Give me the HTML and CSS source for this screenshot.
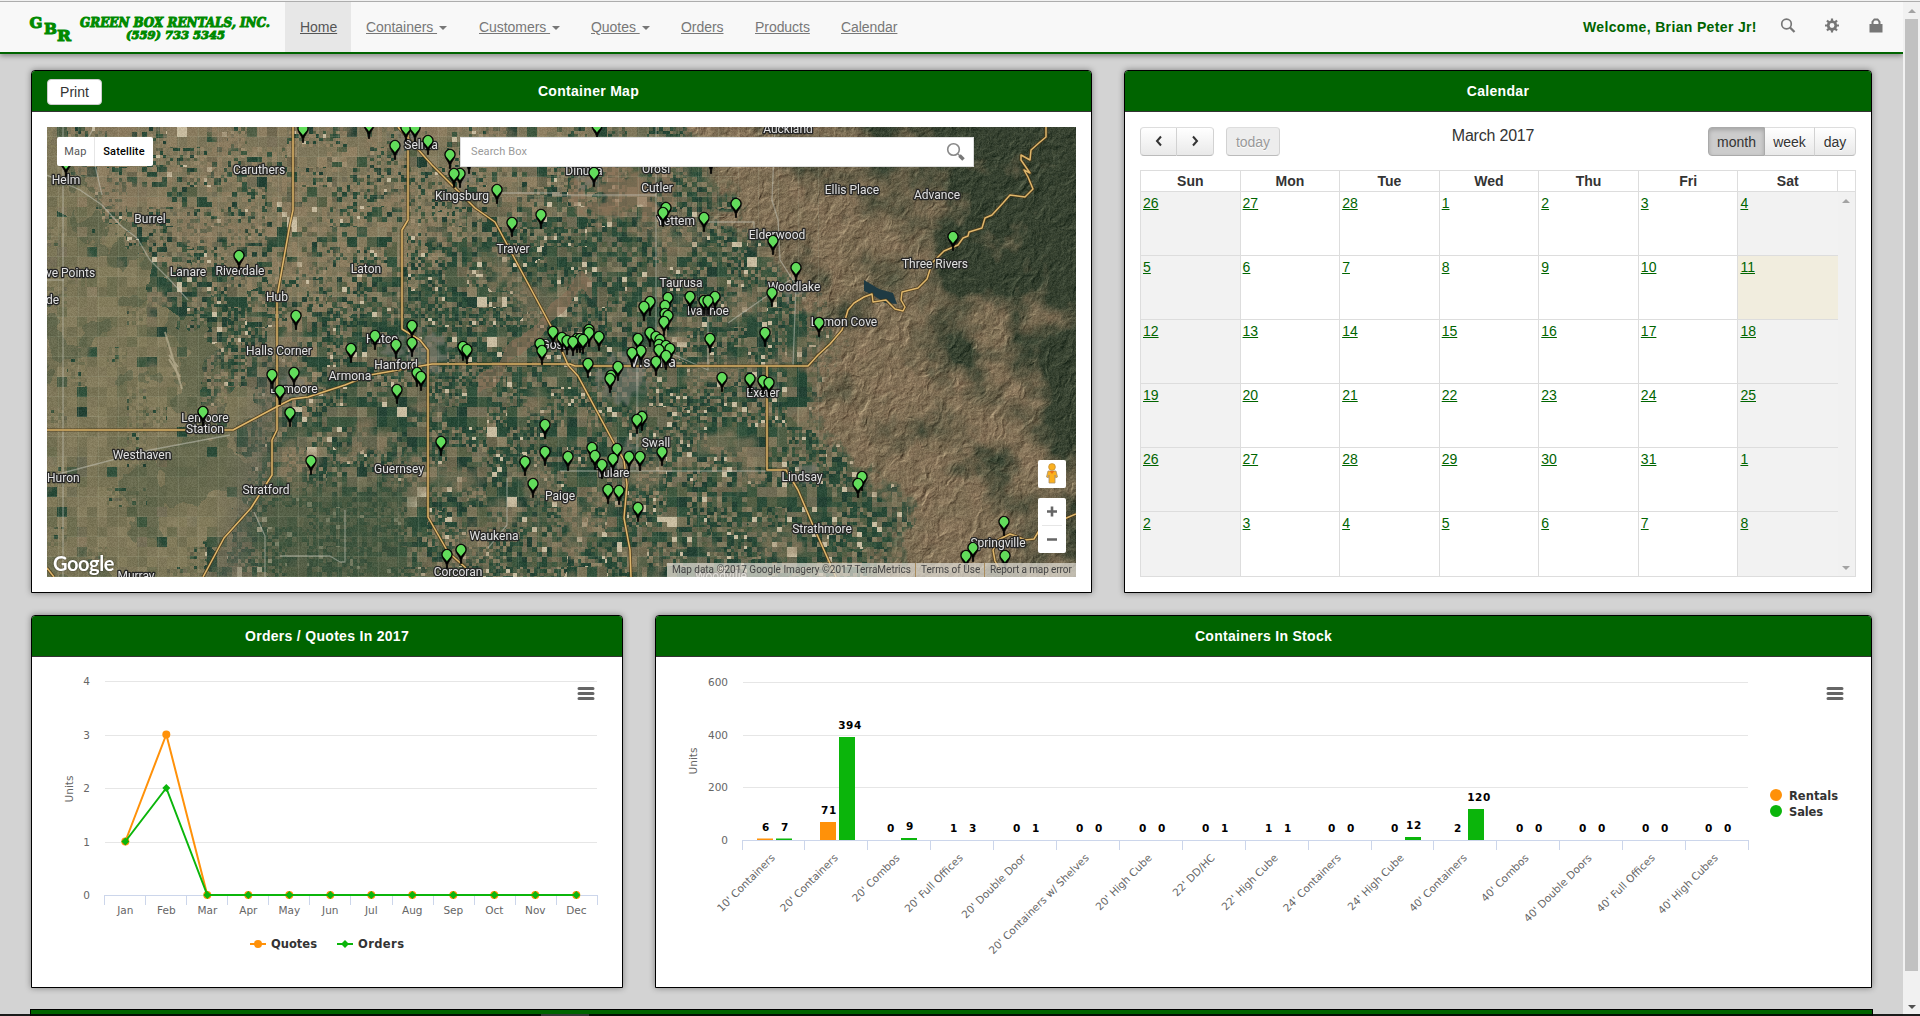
FILE: index.html
```html
<!DOCTYPE html>
<html lang="en">
<head>
<meta charset="utf-8">
<title>Green Box Rentals, Inc.</title>
<link rel="stylesheet" href="styles.css">
</head>
<body>
<div class="page">
  <div class="content">
    <header class="navbar">
      <div class="brand">
        <svg width="285" height="50" viewBox="0 2 285 50" class="logo">
          <text x="29.500" y="27.500" font-size="14.500" textLength="13" lengthAdjust="spacingAndGlyphs">G</text>
          <text x="44" y="34" font-size="14.500" textLength="13" lengthAdjust="spacingAndGlyphs">B</text>
          <text x="57" y="40.500" font-size="14.500" textLength="14" lengthAdjust="spacingAndGlyphs">R</text>
          <text x="80" y="27" font-size="12.500" font-style="italic" textLength="190" lengthAdjust="spacingAndGlyphs">GREEN BOX RENTALS, INC.</text>
          <text x="126" y="38.500" font-size="11.500" font-style="italic" textLength="99" lengthAdjust="spacingAndGlyphs">(559) 733 5345</text>
        </svg>
      </div>
      <nav class="menu">
        <a class="active w-home" href="#">Home</a>
        <a class="w-containers" href="#">Containers <i class="caret"></i></a>
        <a class="w-customers" href="#">Customers <i class="caret"></i></a>
        <a class="w-quotes" href="#">Quotes <i class="caret"></i></a>
        <a class="w-orders" href="#">Orders</a>
        <a class="w-products" href="#">Products</a>
        <a href="#">Calendar</a>
      </nav>
      <div class="user">
        <span class="welcome">Welcome, Brian Peter Jr!</span>
        <svg width="16" height="16" viewBox="0 0 16 16"><circle cx="6.500" cy="6" r="4.800" fill="none" stroke="#777" stroke-width="1.700"/><path d="M10 9.500l4.500 4.500" stroke="#777" stroke-width="2.300"/></svg>
        <svg width="16" height="16" viewBox="0 0 16 16"><circle cx="8" cy="7.500" r="3.800" fill="none" stroke="#777" stroke-width="2.700"/><path d="M8 .5v2.500M8 12v2.500M1 7.500h2.500M12.500 7.500h2.500M3 2.500l2 2M11 10.500l2 2M13 2.500l-2 2M3 12.500l2-2" stroke="#777" stroke-width="2.200"/></svg>
        <svg width="16" height="16" viewBox="0 0 16 16"><path fill="#777" fill-rule="evenodd" d="M1.500 6h2V3.500L6 .5h4l2.500 3V6h2v8.500h-13zM5.500 6h5V4L9.300 2.500H6.700L5.500 4z"/></svg>
      </div>
    </header>

    <main class="rows">
      <div class="row row-top">
        <section class="panel panel-map">
          <h2 class="head head-tools"><button class="print">Print</button>Container Map</h2>
          <div class="map">
            <canvas id="terrain" width="1029" height="450"></canvas>
            <svg id="overlay" class="layer" width="1029" height="450" viewBox="47 127 1029 450"></svg>
            <div class="map-type"><span>Map</span><b>Satellite</b></div>
            <div class="search"><span>Search Box</span>
              <svg width="20" height="20" viewBox="0 0 20 20"><circle cx="7.500" cy="7.500" r="5.800" fill="none" stroke="#888" stroke-width="1.600"/><path d="M12 12l2 2" stroke="#888" stroke-width="1.500"/><path d="M13.500 13.500l4 4" stroke="#777" stroke-width="3.600"/></svg>
            </div>
            <div class="pegman"><svg width="14" height="21" viewBox="0 0 14 21"><circle cx="7" cy="4" r="3.400" fill="#fbb01e" stroke="#b98a3c" stroke-width=".7"/><path d="M3 8h8l1.500 6-1.800.8L10 12v8H4v-8l-.7 2.800L1.500 14z" fill="#fbb01e" stroke="#a9906a" stroke-width=".8"/><path d="M4.500 8h5L7 11z" fill="#e8711c"/></svg></div>
            <div class="zoom"><svg width="28" height="55" viewBox="0 0 28 55"><path d="M9 13.500h10M14 8.500v10M9 41.500h10" stroke="#666" stroke-width="2.600"/><path d="M4 27.500h20" stroke="#e6e6e6"/></svg></div>
            <div class="google">Google</div>
            <div class="credits"><span class="c1">Map data ©2017 Google Imagery ©2017 TerraMetrics</span><span class="c2">Terms of Use</span><span class="c3">Report a map error</span></div>
          </div>
        </section>
        <section class="panel panel-cal">
          <h2 class="head">Calendar</h2>
          <div class="cal">
            <div class="tools">
              <div class="group"><button class="w37"><svg width="10" height="12" viewBox="0 0 10 12"><path d="M7 1.500L3 6l4 4.500" fill="none" stroke="#333" stroke-width="2"/></svg></button><button class="w37"><svg width="10" height="12" viewBox="0 0 10 12"><path d="M3 1.500L7 6l-4 4.500" fill="none" stroke="#333" stroke-width="2"/></svg></button></div>
              <button class="today-btn" disabled>today</button>
              <div class="month-title">March 2017</div>
              <div class="group views"><button class="pressed w56">month</button><button class="w50">week</button><button class="w41">day</button></div>
            </div>
            <div class="grid" id="calendar"></div>
          </div>
        </section>
      </div>
      <div class="row row-charts">
        <section class="panel panel-line">
          <h2 class="head">Orders / Quotes In 2017</h2>
          <svg id="line" class="chart" width="591" height="330" viewBox="32 657 591 330"></svg>
        </section>
        <section class="panel panel-bars">
          <h2 class="head">Containers In Stock</h2>
          <svg id="bars" class="chart" width="1215" height="330" viewBox="656 657 1215 330"></svg>
        </section>
      </div>
      <div class="next-panel"></div>
    </main>
  </div>
  <aside class="scrollbar"><i class="up"></i><div class="thumb"></div><i class="down"></i></aside>
  <div class="taskbar"><i></i></div>
</div>
<script src="script.js"></script>
</body>
</html>
```
FILE: styles.css
```css
* { box-sizing: border-box; }
body { margin: 0; background: #d3d3d3; font: 14px/20px "Liberation Sans", Arial, sans-serif; color: #333; overflow: hidden; }
button { font: inherit; color: inherit; }
.page { width: 1920px; height: 1016px; display: flex; position: relative; overflow: hidden; border-top: 1px solid #f1f1f1; }
.page::before { content: ""; position: absolute; left: 0; right: 0; top: 0; height: 1px; background: #adadad; }
.content { width: 1903px; }

.navbar { height: 53px; padding-top: 1px; display: flex; background: #f8f8f8; border-bottom: 2px solid #006400; box-shadow: 0 2px 5px rgba(0,0,0,.35); }
.brand { width: 285px; }
.logo { display: block; }
.logo text { font-family: "DejaVu Serif", "Liberation Serif", serif; font-weight: 700; fill: #008a00; stroke: #008a00; stroke-width: 1px; }
.menu { display: flex; flex: 1; }
.menu a { padding: 15px 0 0 15px; height: 50px; color: #777; text-decoration: underline; letter-spacing: -.05px; white-space: pre; }
.menu .active { background: #e7e7e7; color: #555; }
.w-home { width: 66px; }
.w-containers { width: 113px; }
.w-customers { width: 112px; }
.w-quotes { width: 90px; }
.w-orders { width: 74px; }
.w-products { width: 86px; }
.caret { display: inline-block; border: 4px solid transparent; border-top-color: #777; border-bottom: 0; vertical-align: middle; margin-left: 2px; }
.user { display: flex; padding: 15px 19px 0 0; }
.user svg { margin: 1px 0 0 28px; }
.user svg:first-of-type { margin-left: 24px; }
.welcome { font-weight: 700; color: #006400; width: 173px; white-space: nowrap; letter-spacing: .35px; }

.rows { padding: 16px 31px 0 31px; }
.row { display: flex; justify-content: space-between; margin-bottom: 22px; }
.row-top { height: 523px; }
.row-charts { height: 373px; margin-bottom: 21px; }
.panel { background: #fff; border: 1px solid #000; border-radius: 4px 4px 0 0; box-shadow: 0 0 6px rgba(0,0,0,.4); }
.panel-map { width: 1061px; }
.panel-cal { width: 748px; }
.panel-line { width: 592px; }
.panel-bars { width: 1217px; }
.head { margin: 0; height: 41px; background: #006400; border-bottom: 1px solid #333; border-radius: 3px 3px 0 0; color: #fff; font-size: 14px; line-height: 40px; text-align: center; position: relative; letter-spacing: .3px; }
.head-tools { padding-left: 54px; }
.print { position: absolute; left: 15px; top: 8px; width: 55px; height: 26px; background: #fff; border: 1px solid #ccc; border-radius: 4px; color: #333; font-weight: 400; line-height: 22px; padding: 0; }
.chart { display: block; }

.map { position: relative; width: 1029px; height: 450px; margin: 15px; overflow: hidden; }
.layer, .map canvas { position: absolute; left: 0; top: 0; }
#overlay text { font: 12px Roboto, sans-serif; fill: #e2e2e2; stroke: #262626; stroke-width: 2.6px; paint-order: stroke; stroke-linejoin: round; text-anchor: middle; }
#overlay .start { text-anchor: start; }
#overlay .big { font-size: 14px; letter-spacing: .8px; }
.map-type { position: absolute; left: 10px; top: 10px; height: 29px; width: 96px; display: flex; background: #fff; border-radius: 2px; font: 11px/29px Roboto, sans-serif; color: #565656; }
.map-type span { width: 38px; text-align: center; border-right: 1px solid #e6e6e6; letter-spacing: .3px; }
.map-type b { flex: 1; text-align: center; color: #000; font-weight: 500; letter-spacing: .15px; }
.search { position: absolute; left: 413px; top: 10px; width: 514px; height: 30px; background: #fff; border: 1px solid #ddd; display: flex; justify-content: space-between; align-items: center; padding: 0 7px 0 10px; color: #999; font: 11px/28px Roboto, sans-serif; letter-spacing: .1px; }
.pegman, .zoom { position: absolute; left: 991px; width: 28px; background: #fff; border-radius: 2px; }
.pegman { top: 333px; height: 28px; text-align: center; padding-top: 3px; line-height: 0; }
.zoom { top: 371px; height: 55px; }
.google { position: absolute; left: 6px; top: 423px; color: #fff; font: 700 20px/26px Lato, sans-serif; letter-spacing: -.4px; text-shadow: 0 0 2px rgba(0,0,0,.6); }
.credits { position: absolute; right: 0; bottom: 0; width: 409px; height: 14px; background: rgba(225,222,214,.72); font: 10px/14px Roboto, sans-serif; color: #444; display: flex; white-space: nowrap; }
.credits span { padding-left: 5px; }
.c1 { width: 248px; }
.c2 { width: 69px; border-left: 1px solid #a98b5c; }
.c3 { border-left: 1px solid #a98b5c; letter-spacing: -.1px; }

.cal { padding: 15px; }
.tools { display: flex; height: 43px; align-items: flex-start; position: relative; }
.tools button { height: 29px; border: 1px solid #d2d2d2; border-color: #ddd #d2d2d2 #bbb; background: linear-gradient(#fff, #e9e9e9); text-shadow: 0 1px 1px #fff; padding: 0; text-align: center; }
.group { display: flex; }
.group button + button { border-left: 0; }
.group button:first-child { border-radius: 4px 0 0 4px; }
.group button:last-child { border-radius: 0 4px 4px 0; }
.w37 { width: 37px; }
.w41 { width: 41px; }
.w50 { width: 50px; }
.w56 { width: 57px; }
.tools .pressed { background: #ccc; box-shadow: inset 0 2px 4px rgba(0,0,0,.2); border-color: #aaa; text-shadow: none; }
.tools .today-btn { width: 54px; margin-left: 12px; border-radius: 4px; color: #999; background: #ededed; }
.month-title { flex: 1; text-align: center; font-size: 16px; line-height: 17px; padding-right: 2px; letter-spacing: -.2px; }
.grid { width: 716px; height: 407px; display: grid; grid-template: 21px repeat(6, 1fr) / repeat(7, 1fr) 17px; border: 1px solid #ddd; }
.grid > div { border-right: 1px solid #ddd; border-bottom: 1px solid #ddd; padding: 1px 2px; }
.grid .day-name { font-weight: 700; text-align: center; padding: 0; }
.grid .weekend { background: #f2f2f2; }
.grid .today { background: #f1edde; }
.grid .last { border-bottom: 0; }
.grid .edge { border-right: 0; }
.grid a { color: #006400; text-decoration: underline; }
.grid .cal-scroll { grid-column: 8; grid-row: 2 / 8; background: #f1f1f1; border: 0; display: flex; flex-direction: column; justify-content: space-between; align-items: center; padding: 7px 0 6px; }
.up, .down { border: 4px solid transparent; }
.up { border-bottom-color: #a3a3a3; border-top: 0; }
.down { border-top-color: #a3a3a3; border-bottom: 0; }

.chart text { font: 10.5px "DejaVu Sans", sans-serif; fill: #666; }
.chart .mid { text-anchor: middle; }
.chart .end { text-anchor: end; }
.chart .value { font-weight: 700; fill: #000; text-anchor: middle; letter-spacing: .6px; }
.chart .legend { font-weight: 700; fill: #333; font-size: 11.5px; }

.next-panel { height: 20px; margin: 0 -1px; background: #006400; border: 1px solid #000; }
.scrollbar { width: 17px; background: #f1f1f1; padding: 8px 2px 0; display: flex; flex-direction: column; align-items: center; }
.thumb { width: 13px; height: 952px; margin: 6px 0 34px; background: #c1c1c1; }
.scrollbar .down { border-top-color: #505050; }
.taskbar { position: absolute; left: 0; right: 0; bottom: 0; height: 2px; background: rgba(5,5,5,.9); }
.taskbar i { position: absolute; left: 541px; width: 48px; top: 0; height: 2px; background: #383838; }
```
FILE: script.js
```js
/* Small deterministic random source, so the terrain is stable between loads. */
function hash(x, y, s) {
  let h = Math.imul(x | 0, 374761393) + Math.imul(y | 0, 668265263) + Math.imul(s | 0, 1442695041);
  h = Math.imul(h ^ (h >>> 13), 1274126177);
  h ^= h >>> 16;
  return (h >>> 0) / 4294967296;
}
function noise(x, y, s) {
  const xi = Math.floor(x), yi = Math.floor(y), fx = x - xi, fy = y - yi;
  const u = fx * fx * (3 - 2 * fx), v = fy * fy * (3 - 2 * fy);
  const a = hash(xi, yi, s), b = hash(xi + 1, yi, s), c = hash(xi, yi + 1, s), d = hash(xi + 1, yi + 1, s);
  return (a + (b - a) * u) * (1 - v) + (c + (d - c) * u) * v;
}
function fbm(x, y, s) {
  return noise(x, y, s) * .5 + noise(x * 2, y * 2, s + 1) * .27 + noise(x * 4, y * 4, s + 2) * .15 + noise(x * 8, y * 8, s + 3) * .08;
}
const clamp = v => Math.max(0, Math.min(1, v));
const mix = (a, b, t) => [a[0] + (b[0] - a[0]) * t, a[1] + (b[1] - a[1]) * t, a[2] + (b[2] - a[2]) * t];
function along(stops, y) {
  for (let i = 1; i < stops.length; i++) {
    if (y <= stops[i][0]) {
      const p = stops[i - 1], q = stops[i];
      return p[1] + (q[1] - p[1]) * (y - p[0]) / (q[0] - p[0]);
    }
  }
  return stops[stops.length - 1][1];
}

/* Towns drawn as grey patches: x, y, radius. */
const towns = [[378, 225, 22], [350, 222, 14], [245, 258, 14], [575, 252, 26], [355, 15, 14], [415, 50, 10], [575, 330, 16], [540, 50, 12], [520, 225, 14], [715, 260, 12], [745, 165, 9], [760, 345, 10]];
const lime = [[96, 101, 72], [42, 75, 56], [32, 62, 50], [66, 90, 64], [138, 124, 95], [117, 106, 81], [52, 84, 62], [158, 139, 108], [86, 98, 72], [36, 71, 53], [128, 116, 92]];
const khaki = [[122, 116, 85], [134, 126, 92], [114, 110, 80], [128, 119, 90], [105, 104, 76], [140, 130, 98], [96, 102, 72]];

function fieldColour(x, y) {
  const bw = 20, bx = Math.floor(x / bw), by = Math.floor(y / bw);
  const r = hash(bx, by, 3);
  const wild = clamp((fbm(x / 90, y / 90, 50) - .35) * 2);
  let size = r < .2 ? 10 : r < .55 + wild * .3 ? 5 : 3.4;
  const west = clamp((along([[0, 20], [100, 70], [170, 130], [250, 190], [330, 205], [450, 170]], y) - x + (fbm(x / 40, y / 40, 9) - .5) * 150) / 35);
  if (west > .5 && r < .8) size = 10;
  const sx = Math.floor(x / size), sy = Math.floor(y / size);
  const n = hash(sx, sy, 11), tone = hash(sx, sy, 12);
  const north = clamp((along([[0, 420], [60, 330], [130, 190], [200, 60], [450, 20]], y) - Math.abs(x - 240)) / 130) * .6;
  let c;
  if (west > .5 && n > .1) {
    c = mix(khaki[Math.floor(tone * khaki.length)], [126, 120, 90], .45);
    if (fbm(x / 50, y / 50, 37) > .6) c = mix(c, [80, 92, 68], .5);
  } else {
    c = lime[Math.floor(tone * lime.length)];
    c = mix(c, [44, 74, 56], fbm(x / 60, y / 60, 31) * .45);
    if (n > .97) c = [200, 188, 160];
    if (hash(sx, sy, 15) < north) c = mix(c, [146, 129, 99], .8);
    const dry = clamp((fbm(x / 35, y / 35, 38) - .56) * 6);
    c = mix(c, [138, 121, 94], dry * .6);
  }
  /* drained lake bed at the bottom of the valley */
  const bed = clamp((32 - Math.abs(x - 205 - (y - 340) * -.2)) / 30) * clamp((y - 200) / 60);
  c = mix(c, [106, 104, 88], bed * .6);
  const marsh = clamp((90 - Math.abs(x - 290)) / 30) * clamp((y - 345) / 25);
  c = mix(c, [70, 88, 64], marsh * .65);
  const g = (hash(x, y, 20) - .5) * 16;
  return [c[0] + g, c[1] + g, c[2] + g];
}
function elevation(x, y) {
  const wx = x + fbm(x / 24, y / 24, 71) * 26, wy = y + fbm(x / 24, y / 24, 77) * 26;
  return (1 - Math.abs(fbm((wx + wy * .35) / 15, (wy - wx * .3) / 19, 81) * 2 - 1)) * .6 + fbm(x / 6, y / 6, 90) * .34;
}
function hillColour(x, y) {
  const shade = (elevation(x + 1, y + 1) - elevation(x, y)) * 230;
  const f = fbm(x / 38, y / 38, 61);
  const edge = along([[0, 790], [60, 825], [120, 860], [200, 890], [270, 925], [340, 980], [390, 1030], [450, 1000]], y);
  const dark = clamp((x - edge) / 150 + (f - .45) * 2.8 + .3) * .93;
  let c = mix([137, 115, 90], [46, 60, 44], dark);
  c = mix(c, [112, 104, 78], fbm(x / 16, y / 16, 65) * .75 * (1 - dark));
  const k = 1 - dark * .4, g = (hash(x, y, 22) - .5) * 18;
  return [c[0] + shade * k + g, c[1] + shade * k * .95 + g, c[2] + shade * k * .8 + g];
}
(function paintTerrain() {
  const canvas = document.getElementById('terrain'), ctx = canvas.getContext('2d');
  const W = 1029, H = 450, img = ctx.createImageData(W, H);
  for (let y = 0; y < H; y++) {
    const foot = along([[0, 640], [50, 665], [110, 700], [160, 745], [210, 780], [245, 765], [290, 755], [330, 810], [380, 855], [450, 835]], y);
    for (let x = 0; x < W; x++) {
      const hill = clamp((x - foot + (fbm(x / 18, y / 18, 40) - .5) * 70) / 20 + .5);
      let c = hill >= 1 ? hillColour(x, y) : hill <= 0 ? fieldColour(x, y) : mix(fieldColour(x, y), hillColour(x, y), hill);
      const scrub = Math.hypot((x - 575) / 1.3, y - 65);
      if (scrub < 42) c = mix(c, [142, 115, 89], clamp((fbm(x / 12, y / 12, 44) + (42 - scrub) / 90 - .55) * 5) * .7);
      /* dry river wash crossing the middle of the valley */
      const wash = Math.abs(y - (250 - (x - 440) * .95) - (noise(x / 14, 3, 46) - .5) * 26);
      if (x > 430 && x < 545 && wash < 9) c = mix(c, [140, 112, 88], .6);
      for (const t of towns) {
        const d = Math.hypot(x - t[0], y - t[1]) + (noise(x / 5, y / 5, 33) - .5) * 18;
        if (d < t[2]) c = mix(c, [122, 122, 112], .6 * clamp((t[2] - d) / 8));
      }
      const p = (y * W + x) * 4;
      img.data[p] = c[0]; img.data[p + 1] = c[1]; img.data[p + 2] = c[2]; img.data[p + 3] = 255;
    }
  }
  ctx.putImageData(img, 0, 0);
  /* farm roads on a faint one-mile grid */
  ctx.strokeStyle = 'rgba(190,200,175,.15)';
  ctx.beginPath();
  for (let x = 11.5; x < 780; x += 20) { ctx.moveTo(x, 0); ctx.lineTo(x, x > 660 ? 320 : 450); }
  for (let y = 9.5; y < 450; y += 20) { ctx.moveTo(0, y); ctx.lineTo(690, y); }
  ctx.stroke();
  /* Lake Kaweah */
  ctx.fillStyle = '#1f3a43';
  ctx.beginPath();
  ctx.moveTo(817, 153); ctx.lineTo(832, 162); ctx.lineTo(846, 166); ctx.lineTo(850, 177); ctx.lineTo(838, 176); ctx.lineTo(826, 168); ctx.lineTo(817, 164);
  ctx.fill();
  /* airfield west of Lemoore */
  ctx.strokeStyle = 'rgba(195,185,155,.65)';
  ctx.lineWidth = 2;
  ctx.beginPath();
  ctx.moveTo(118, 205); ctx.lineTo(135, 262); ctx.moveTo(122, 232); ctx.lineTo(133, 250); ctx.moveTo(122, 228); ctx.lineTo(131, 240);
  ctx.stroke();
})();

const minor = [
  '63,127 63,577', '47,280 64,280', '47,175 80,190 102,205 120,225 137,238 150,260 170,280 188,300', '83,148 95,165 102,195', '83,148 94,127',
  '656,127 656,366', '552,195 656,195', '495,193 560,193', '704,222 754,222 754,235', '775,127 772,200 778,220 780,260 796,285 793,366', '728,323 790,280', '560,471 785,471',
  '637,366 637,470', '507,478 507,525 488,548', '47,477 150,450 230,435', '708,300 708,370 668,352', '265,577 265,536 254,512', '280,556 330,556 340,562 345,562 345,510'
];
const highways = [
  '293,127 293,210 290,224 277,297 277,430 272,440 272,475 251,508 224,538 203,577',
  '408,130 408,220 402,230 402,329 420,340 428,350 428,517 448,552 466,568',
  '398,127 432,165 475,208 495,222 502,235 553,330 568,365 578,376 615,445 624,460 627,485 624,518 630,550 631,577',
  '47,430 233,430 280,405 292,399 308,397 345,385 370,375 432,364 570,364 575,366 808,366 818,355 830,344 842,330 848,310 854,303 864,297 872,294 873,302 886,300 895,309 903,311 905,307 901,300 902,292 918,288 927,279 932,263 944,251 958,245 963,238 968,236 969,232 982,228 985,218 992,215 1003,203 1010,195 1025,197 1033,189 1028,177 1024,170 1030,173 1021,160 1021,155 1030,160 1031,150 1040,142 1046,137 1046,127',
  '767,366 767,470 786,470 798,490 815,530 836,577',
  '1076,514 1064,519 1040,529 1034,539 1025,540 1016,536 1010,534 998,540 993,550 995,561 1000,570', '47,568 54,577'
];
const labels = [
  ['Selma', 421, 145], ['Caruthers', 259, 170], ['Helm', 66, 180], ['Burrel', 150, 219], ['Lanare', 188, 272], ['Riverdale', 240, 271], ['Laton', 366, 269], ['Kingsburg', 462, 196], ['Traver', 513, 249],
  ['ve Points', 46, 273, 'start'], ['de', 46, 300, 'start'], ['Hub', 277, 297], ['Hanford', 396, 365], ['Armona', 350, 376], ['Halls Corner', 279, 351], ['Lemoore', 294, 389], ['Lemoore', 205, 418], ['Station', 205, 429],
  ['Westhaven', 142, 455], ['Huron', 47, 478, 'start'], ['Stratford', 266, 490], ['Guernsey', 399, 469], ['Waukena', 494, 536], ['Corcoran', 458, 572], ['Murray', 136, 576], ['Paige', 560, 496], ['Auckland', 788, 129],
  ['Ellis Place', 852, 190], ['Advance', 937, 195], ['Three Rivers', 935, 264], ['Elderwood', 777, 235], ['Yettem', 676, 221], ['Cutler', 657, 188], ['Orosi', 656, 169], ['Dinuba', 584, 171], ['Taurusa', 681, 283],
  ['Ivanhoe', 708, 311], ['Woodlake', 794, 287], ['Lemon Cove', 844, 322], ['Visalia', 653, 363, 'big'], ['Goshen', 562, 345], ['Hatco', 382, 339], ['Exeter', 763, 393], ['Swall', 656, 443], ['Tulare', 613, 473],
  ['Lindsay', 802, 477], ['Strathmore', 822, 529], ['Springville', 998, 543], ['Woodville', 721, 576]
];
const pins = [
  [303, 129], [369, 125], [406, 128], [415, 128], [428, 141], [395, 146], [450, 155], [469, 160], [460, 174], [454, 174], [497, 190], [512, 223], [541, 215], [239, 256], [296, 316], [66, 163], [412, 326], [375, 336], [396, 345], [412, 343], [351, 349], [463, 347], [467, 350],
  [597, 126], [594, 173], [711, 160], [666, 208], [663, 213], [704, 218], [736, 204], [773, 241], [796, 268], [772, 293], [953, 237], [819, 323], [765, 333], [690, 297], [704, 301], [715, 297], [708, 301], [668, 298], [665, 306], [650, 302], [644, 307], [665, 314], [668, 316], [664, 322], [710, 339],
  [553, 332], [540, 344], [542, 351], [562, 338], [567, 341], [577, 339], [580, 339], [573, 342], [589, 330], [589, 333], [583, 340], [599, 337], [588, 364], [618, 367], [611, 376], [610, 379], [638, 339], [650, 333], [656, 337], [660, 340], [659, 345], [666, 346], [659, 350], [670, 349], [666, 356], [656, 362], [641, 351], [632, 353], [722, 378], [750, 379], [763, 381], [769, 383],
  [272, 375], [294, 373], [280, 391], [290, 413], [203, 412], [311, 461], [397, 390], [417, 373], [421, 377], [441, 442], [545, 425], [545, 452], [525, 462], [533, 484], [447, 555], [461, 550],
  [642, 417], [637, 420], [592, 448], [595, 456], [617, 449], [613, 459], [602, 465], [629, 457], [640, 457], [662, 452], [568, 457], [608, 490], [619, 491], [638, 508], [862, 477], [858, 484], [1004, 522], [973, 548], [966, 556], [1005, 556]
];
document.getElementById('overlay').innerHTML =
  '<g fill="none" stroke-linejoin="round">' +
  minor.map(p => `<polyline points="${p}" stroke="#c9c9bd" stroke-opacity=".5" stroke-width="1.3"/>`).join('') +
  highways.map(p => `<polyline points="${p}" stroke="#4a3718" stroke-opacity=".8" stroke-width="3.2"/>`).join('') +
  highways.map(p => `<polyline points="${p}" stroke="#dfb76c" stroke-width="1.5"/>`).join('') + '</g>' +
  labels.map(([t, x, y, c]) => `<text x="${x}" y="${y + 4}" class="${c || ''}">${t}</text>`).join('') +
  pins.map(([x, y]) => `<path transform="translate(${x} ${y})" d="M-.6 13.500V10C-1.500 6-5.300 3.700-5.300-.5A5.300 5.300 0 0 1 5.300-.5C5.300 3.700 1.500 6 .6 10V13.500Z" fill="#000" stroke="#000" stroke-width=".8"/><path transform="translate(${x} ${y})" d="M0 6.500C-1 3.800-4.400 2.500-4.400-.5A4.400 4.400 0 0 1 4.400-.5C4.400 2.500 1 3.800 0 6.500Z" fill="#62dc5b"/>`).join('');

/* Calendar */
const days = ['Sun', 'Mon', 'Tue', 'Wed', 'Thu', 'Fri', 'Sat'];
let cells = days.map(d => `<div class="day-name">${d}</div>`).join('') + '<div class="day-name edge"></div>';
for (let i = 0; i < 42; i++) {
  const d = new Date(2017, 1, 26 + i), col = i % 7, cls = [];
  if (col === 0 || col === 6) cls.push('weekend');
  if (d.getMonth() === 2 && d.getDate() === 11) cls.push('today');
  if (col === 6) cls.push('edge');
  if (i > 34) cls.push('last');
  cells += `<div class="${cls.join(' ')}" style="grid-column:${col + 1};grid-row:${Math.floor(i / 7) + 2}"><a href="#">${d.getDate()}</a></div>`;
}
document.getElementById('calendar').innerHTML = cells + '<div class="cal-scroll"><i class="up"></i><i class="down"></i></div>';

/* Charts */
const burger = (x, y) => `<path d="M${x} ${y + 1.500}h14M${x} ${y + 6.500}h14M${x} ${y + 11.500}h14" stroke="#666" stroke-width="3" stroke-linecap="round"/>`;
const orange = '#ff9109', green = '#0bb50b';
(function lineChart() {
  const yOf = v => 895 - v * 53.5, xOf = i => 125.3 + i * 41;
  let s = '';
  for (let v = 1; v < 5; v++) s += `<path d="M105 ${Math.round(yOf(v)) + .5}H597" stroke="#e6e6e6"/>`;
  for (let v = 0; v < 5; v++) s += `<text class="end" x="90" y="${yOf(v) + 4}">${v}</text>`;
  s += '<path d="M104.500 895.500H597.500" stroke="#ccd6eb"/>';
  for (let i = 0; i < 13; i++) s += `<path d="M${Math.floor(104.5 + i * 41.08) + .5} 895v10" stroke="#ccd6eb"/>`;
  'Jan Feb Mar Apr May Jun Jul Aug Sep Oct Nov Dec'.split(' ').forEach((m, i) => s += `<text class="mid" x="${xOf(i)}" y="914">${m}</text>`);
  const quotes = [1, 3, 0, 0, 0, 0, 0, 0, 0, 0, 0, 0], orders = [1, 2, 0, 0, 0, 0, 0, 0, 0, 0, 0, 0];
  const line = (a, c) => `<polyline fill="none" stroke="${c}" stroke-width="2" stroke-linejoin="round" points="${a.map((v, i) => xOf(i) + ',' + yOf(v)).join(' ')}"/>`;
  const dia = (x, y) => `<path d="M${x} ${y - 4}l4 4-4 4-4-4z" fill="${green}"/>`;
  s += line(quotes, orange) + quotes.map((v, i) => `<circle cx="${xOf(i)}" cy="${yOf(v)}" r="4" fill="${orange}"/>`).join('');
  s += line(orders, green) + orders.map((v, i) => dia(xOf(i), yOf(v))).join('');
  s += '<text class="mid" transform="translate(73 789) rotate(-90)">Units</text>' + burger(579, 687);
  s += `<path d="M250 944h16" stroke="${orange}" stroke-width="2"/><circle cx="258" cy="944" r="4" fill="${orange}"/><text class="legend" x="271" y="948" textLength="46">Quotes</text>`;
  s += `<path d="M337 944h16" stroke="${green}" stroke-width="2"/>${dia(345, 944)}<text class="legend" x="358" y="948" textLength="46">Orders</text>`;
  document.getElementById('line').innerHTML = s;
})();
(function barChart() {
  const data = [["10' Containers", 6, 7], ["20' Containers", 71, 394], ["20' Combos", 0, 9], ["20' Full Offices", 1, 3], ["20' Double Door", 0, 1], ["20' Containers w/ Shelves", 0, 0], ["20' High Cube", 0, 0], ["22' DD/HC", 0, 1], ["22' High Cube", 1, 1], ["24' Containers", 0, 0], ["24' High Cube", 0, 12], ["40' Containers", 2, 120], ["40' Combos", 0, 0], ["40' Double Doors", 0, 0], ["40' Full Offices", 0, 0], ["40' High Cubes", 0, 0]];
  const step = 62.9, base = 840, h = v => v > 4 ? Math.max(1.5, Math.floor(v * .2625)) : 0;
  let s = '';
  [[600, 682], [400, 735], [200, 787]].forEach(([v, y]) => s += `<path d="M743 ${y + .5}H1748" stroke="#e6e6e6"/><text class="end" x="728" y="${y + 4}">${v}</text>`);
  s += '<text class="end" x="728" y="844">0</text>';
  data.forEach(([name, a, b], i) => {
    const x = Math.round(756.6 + i * step);
    if (h(a)) s += `<rect x="${x}" y="${base - h(a)}" width="16" height="${h(a)}" fill="${orange}"/>`;
    if (h(b)) s += `<rect x="${x + 19}" y="${base - h(b)}" width="16" height="${h(b)}" fill="${green}"/>`;
    s += `<text class="value" x="${x + 9}" y="${base - 8 - h(a)}">${a}</text><text class="value" x="${x + 28 + (b > 99 ? 2 : 0)}" y="${base - 8 - h(b)}">${b}</text>`;
    s += `<text class="end" transform="translate(${x + 18.500} 858.500) rotate(-45)">${name}</text>`;
  });
  s += '<path d="M742 840.500H1748.500" stroke="#ccd6eb"/>';
  for (let i = 0; i < 17; i++) s += `<path d="M${Math.floor(742 + i * step) + .5} 840v10" stroke="#ccd6eb"/>`;
  s += '<text class="mid" transform="translate(697 761) rotate(-90)">Units</text>' + burger(1828, 687);
  s += `<circle cx="1776" cy="795" r="6" fill="${orange}"/><circle cx="1776" cy="811" r="6" fill="${green}"/><text class="legend" x="1789" y="800" textLength="49">Rentals</text><text class="legend" x="1789" y="816" textLength="34">Sales</text>`;
  document.getElementById('bars').innerHTML = s;
})();
```
